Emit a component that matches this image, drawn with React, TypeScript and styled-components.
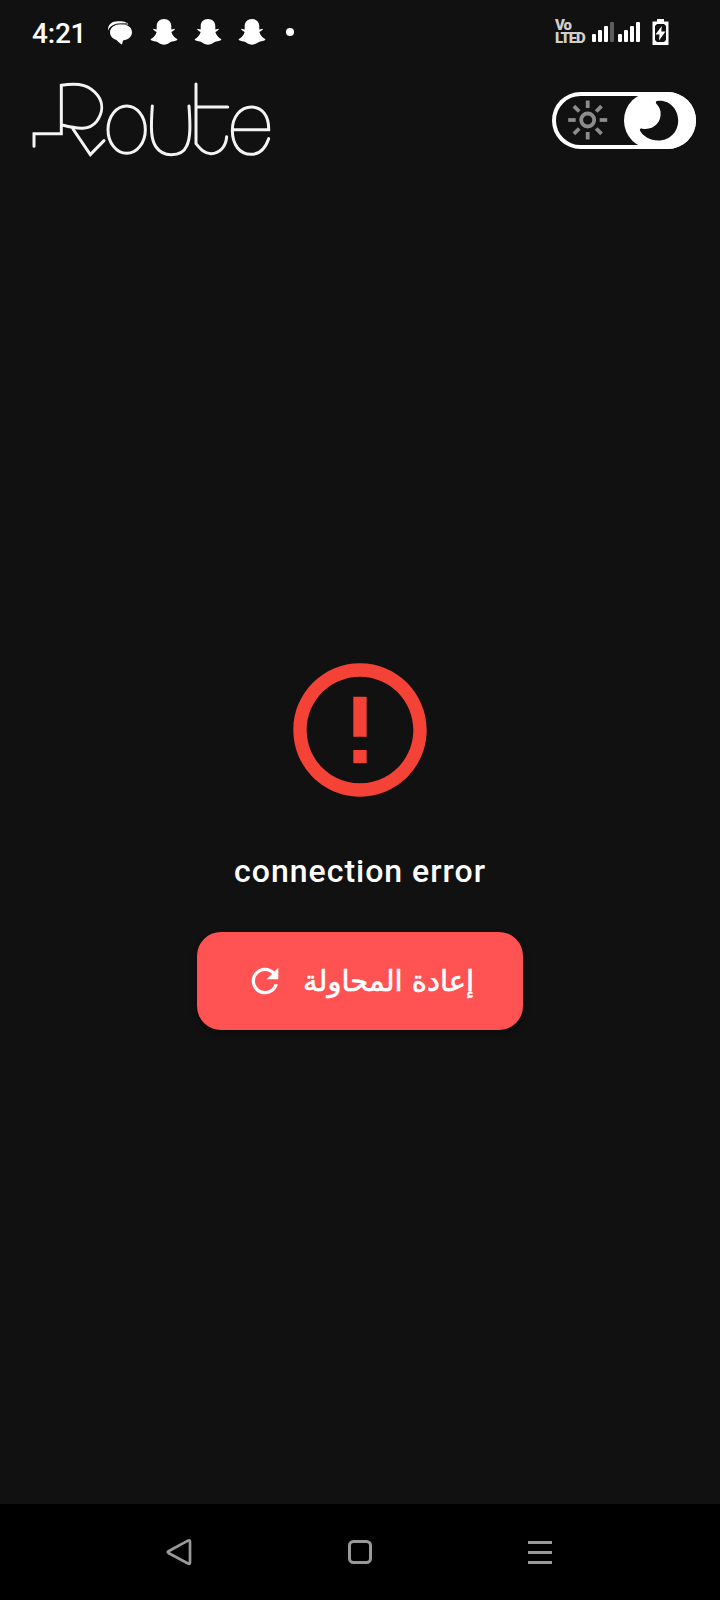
import React from "react";
import styled, { createGlobalStyle } from "styled-components";
import { MdErrorOutline, MdRefresh } from "react-icons/md";

const GlobalStyle = createGlobalStyle`
  * { box-sizing: border-box; }
  body { margin: 0; background: #111111; }
`;

const Screen = styled.div`
  width: 720px;
  height: 1600px;
  display: flex;
  flex-direction: column;
  background: #111111;
  color: #ffffff;
  font-family: Roboto, "DejaVu Sans", sans-serif;
`;

const StatusBar = styled.div`
  height: 64px;
  flex: none;
  display: flex;
  justify-content: space-between;
  align-items: center;
  padding: 0 51px 0 32px;
`;

const StatusGroup = styled.div`
  display: flex;
  align-items: center;
`;

const Clock = styled.span`
  width: 74px;
  font-size: 28px;
  line-height: 32px;
  font-weight: 500;
  letter-spacing: -0.2px;
  padding-top: 3px;
`;

const Notifications = styled.div`
  display: flex;
  align-items: center;
  gap: 16px;
`;

const MoreDot = styled.span`
  width: 8px;
  height: 8px;
  margin-left: 4px;
  border-radius: 50%;
  background: #ffffff;
`;

const Volte = styled.span`
  width: 37px;
  color: #cfcfcf;
  font-family: Roboto, sans-serif;
  font-weight: 900;
  font-size: 15px;
  line-height: 13px;
  letter-spacing: -1.2px;
  white-space: pre-line;
`;

const Signal = styled.div`
  display: flex;
  align-items: flex-end;
  gap: 2px;
  height: 20px;
  margin-right: 4px;
`;

const SignalBar = styled.span<{ $height: number; $dim?: boolean }>`
  width: 4px;
  height: ${(p) => p.$height}px;
  border-radius: 1px;
  background: ${(p) => (p.$dim ? "#5c5c5c" : "#ffffff")};
`;

const BatterySvg = styled.svg`
  margin-left: 8px;
`;

const Header = styled.header`
  height: 114px;
  flex: none;
  display: flex;
  justify-content: space-between;
  align-items: flex-start;
  padding: 6px 24px 0 20px;
`;

const Toggle = styled.div`
  width: 144px;
  height: 57px;
  margin-top: 21.5px;
  display: flex;
  border-radius: 29px;
  box-shadow: inset 0 0 0 4px #ffffff;
`;

const ToggleSide = styled.div<{ $active?: boolean }>`
  width: 72px;
  height: 57px;
  border-radius: 29px;
  background: ${(p) => (p.$active ? "#ffffff" : "transparent")};
`;

const Content = styled.main`
  flex: 1;
  display: flex;
  flex-direction: column;
  align-items: center;
  padding-top: 472px;
`;

const Message = styled.p`
  margin: 41px 0 0;
  font-size: 32px;
  line-height: 40px;
  font-weight: 500;
  letter-spacing: 1px;
`;

const RetryButton = styled.button`
  width: 326px;
  height: 98px;
  margin-top: 41px;
  padding: 0 40px 0 48px;
  display: flex;
  align-items: center;
  gap: 18px;
  border: 0;
  border-radius: 24px;
  background: #ff5252;
  color: #ffffff;
  font-family: "DejaVu Sans", sans-serif;
  font-size: 29px;
  box-shadow: 0 4px 6px rgba(0, 0, 0, 0.3);
`;

const RefreshIcon = styled(MdRefresh)`
  width: 40px;
  height: 40px;
  flex: none;
`;

const RetryLabel = styled.span`
  white-space: nowrap;
  line-height: 40px;
  -webkit-text-stroke: 0.6px #ffffff;
`;

const NavBar = styled.nav`
  height: 96px;
  flex: none;
  display: flex;
  justify-content: center;
  align-items: center;
  gap: 152px;
  background: #000000;
`;

const ChatIcon = () => (
  <svg width="28" height="28" viewBox="0 0 28 28">
    <path d="M2.200 12.500C1.500 6.500 6 3.200 12 3.200c5 0 8.500.5 10.500 3.300H9C5.500 7.500 3 9.500 2.200 12.500z" fill="#fff" />
    <path
      d="M15 6.300c6.500 0 11 3 11 8 0 4.300-3.500 7.400-9 8.200L16 26.600c-2-1-4-2.800-5.500-4.600-4-1.200-6.500-4-6.500-7.700 0-5 4.500-8 11-8z"
      fill="#fff"
    />
    <path d="M4 11.500C6 7.500 9.500 5.800 14 5.800h7" fill="none" stroke="#111" strokeWidth="0.9" />
  </svg>
);

const GhostIcon = () => (
  <svg width="28" height="28" viewBox="0 0 28 28">
    <path
      d="M14 1C18.500 1 21.300 4 21.300 8v3.500l3.500-.8c.5 1-1.500 2.200-3.500 3.200 1 3.300 3.200 5.800 6.200 7.300-.5 1.500-3 1.800-5.500 2.300-2.500.8-4.500 3.200-8 3.200s-5.500-2.400-8-3.200C3.500 23 1 22.700.5 21.200c3-1.500 5.200-4 6.200-7.300-2-1-4-2.200-3.500-3.200l3.500.8V8C6.700 4 9.500 1 14 1z"
      fill="#fff"
    />
  </svg>
);

const BatteryIcon = () => (
  <BatterySvg width="17" height="26" viewBox="0 0 17 26">
    <path d="M5 0h7v2.500h4.500V26H.5V2.500H5z" fill="#fff" />
    <path d="M5 5h7l2 2v14l-2 2H5l-2-2V7z" fill="#111" />
    <path d="M9.800 7L3.500 15.500H7.500L7 21.500l6.500-9H9.300z" fill="#fff" />
  </BatterySvg>
);

const RouteLogo = () => (
  <svg width="260" height="100" viewBox="0 0 780 300" role="img" aria-label="Route">
    <g fill="none" stroke="#f4f4f4" strokeWidth="9" strokeLinecap="round">
      <path d="M42 229V191H124V46C182 36 211 48 233 76C250 99 249 128 230 154C209 181 176 178 127 165" />
      <path d="M159 177L211 254L252 212" />
      <ellipse cx="320" cy="179" rx="56" ry="71" />
      <path d="M397 108C392 175 393 207 407 229C420 249 435 254 454 254C474 254 492 247 500 228C512 204 511 165 507 108" />
      <path d="M528 42V221C542 238 553 251 573 251C598 251 618 231 620 200M528 111H623" />
      <path d="M637 179H746C747 137 726 111 695 111C661 111 637 141 637 181C637 224 659 253 693 253C720 253 736 235 746 206" />
    </g>
  </svg>
);

const SunIcon = () => (
  <svg width="72" height="58" viewBox="0 0 72 58">
    <g fill="none" stroke="#8c8c8c" strokeWidth="3.800">
      <circle cx="35.700" cy="28" r="6.500" />
      {[0, 45, 90, 135, 180, 225, 270, 315].map((angle) => (
        <path key={angle} d="M35.700 8.500V16" transform={`rotate(${angle} 35.700 28)`} />
      ))}
    </g>
  </svg>
);

const MoonIcon = () => (
  <svg width="72" height="58" viewBox="0 0 72 58">
    <path
      d="M33 9C45 7 54.200 17 54.200 28.500C54.200 40 45.500 48.500 34.500 48.500C26 48.500 18 43.500 16 38.500C15.500 36.500 16.500 36 18.500 36.700C29 38.500 38 30.500 36.500 19.500C36 16.500 34.500 14 32.500 12C31.500 10.500 31.500 9.300 33 9z"
      fill="#111"
    />
  </svg>
);

export default function App() {
  return (
    <Screen>
      <GlobalStyle />
      <StatusBar>
        <StatusGroup>
          <Clock>4:21</Clock>
          <Notifications>
            <ChatIcon />
            <GhostIcon />
            <GhostIcon />
            <GhostIcon />
            <MoreDot />
          </Notifications>
        </StatusGroup>
        <StatusGroup>
          <Volte>{"Vo\nLTED"}</Volte>
          <Signal>
            <SignalBar $height={8} />
            <SignalBar $height={12} />
            <SignalBar $height={16} />
            <SignalBar $height={20} $dim />
          </Signal>
          <Signal>
            <SignalBar $height={8} />
            <SignalBar $height={12} />
            <SignalBar $height={16} />
            <SignalBar $height={20} />
          </Signal>
          <BatteryIcon />
        </StatusGroup>
      </StatusBar>
      <Header>
        <RouteLogo />
        <Toggle>
          <ToggleSide>
            <SunIcon />
          </ToggleSide>
          <ToggleSide $active>
            <MoonIcon />
          </ToggleSide>
        </Toggle>
      </Header>
      <Content>
        <MdErrorOutline size={160} color="#f44336" />
        <Message>connection error</Message>
        <RetryButton>
          <RefreshIcon />
          <RetryLabel dir="rtl" lang="ar">إعادة المحاولة</RetryLabel>
        </RetryButton>
      </Content>
      <NavBar>
        <svg width="28" height="28" viewBox="0 0 28 28">
          <path d="M22 2.600L2.500 13.200Q1 14 2.500 15L22 25.500Q24 26.400 24 24.500V3.600Q24 1.600 22 2.600z" fill="none" stroke="#999" strokeWidth="2.700" />
        </svg>
        <svg width="28" height="28" viewBox="0 0 28 28">
          <rect x="3.500" y="3.500" width="21" height="21" rx="4" fill="none" stroke="#999" strokeWidth="3" />
        </svg>
        <svg width="28" height="28" viewBox="0 0 28 28">
          <path d="M2 4.500H26M2 14.500H26M2 24.500H26" stroke="#999" strokeWidth="3" />
        </svg>
      </NavBar>
    </Screen>
  );
}
